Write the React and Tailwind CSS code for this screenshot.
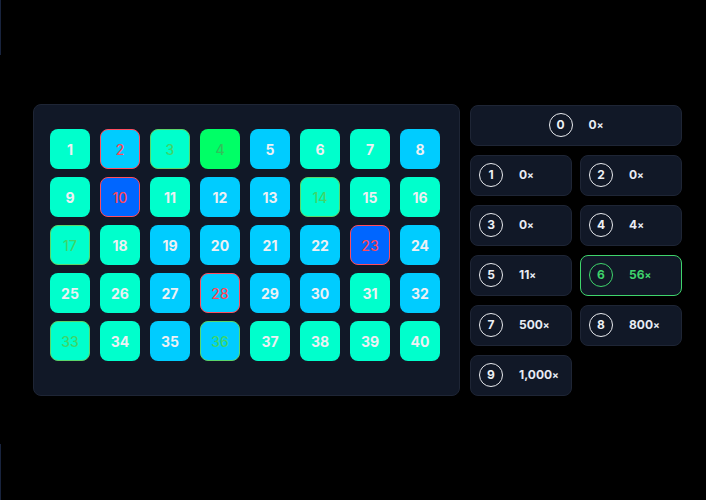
import React from "react";

const T = "bg-[#00ffcc]";
const B = "bg-[#00ccff]";
const D = "bg-[#0066ff]";
const G = "bg-[#00ff66]";

const tiles = [
  [T, "n"], [B, "r"], [T, "g"], [G, "g4"], [B, "n"], [T, "n"], [T, "n"], [B, "n"],
  [T, "n"], [D, "r"], [T, "n"], [B, "n"], [B, "n"], [T, "g"], [T, "n"], [T, "n"],
  [T, "g"], [T, "n"], [B, "n"], [B, "n"], [B, "n"], [B, "n"], [D, "r"], [B, "n"],
  [T, "n"], [T, "n"], [B, "n"], [B, "r"], [B, "n"], [B, "n"], [T, "n"], [B, "n"],
  [T, "g"], [T, "n"], [B, "n"], [B, "g"], [T, "n"], [T, "n"], [T, "n"], [T, "n"],
];

function Tile({ n, bg, state }) {
  let extra = "text-[#eef0f4] font-bold border border-transparent";
  if (state === "r") extra = "text-[#ff4759] font-medium border border-[#ff4d5e]";
  if (state === "g") extra = "text-[#3ed66a] font-medium border border-[#5ad56a]";
  if (state === "g4") extra = "text-[#2fc25a] font-medium border border-transparent";
  return (
    <div className={`w-10 h-10 rounded-lg flex items-center justify-center text-[14px] ${bg} ${extra}`}>
      {n}
    </div>
  );
}

function Pay({ k, mult, sel, wide }) {
  return (
    <div
      className={`h-[41px] rounded-lg bg-[#111827] border flex items-center ${
        sel ? "border-[#3fd46c]" : "border-[#1e2535]"
      } ${wide ? "justify-center" : "pl-[8px]"}`}
    >
      <div
        className={`w-6 h-6 rounded-full border-[1.5px] flex items-center justify-center text-[12px] font-bold ${
          sel ? "border-[#3fd46c] text-[#3fd46c]" : "border-[#e8eaee] text-[#eef0f4]"
        }`}
      >
        {k}
      </div>
      <div className={`ml-4 text-[12px] font-bold ${sel ? "text-[#3fd46c]" : "text-[#e8ecf4]"}`}>
        {mult}
        <span className="text-[10px]">×</span>
      </div>
    </div>
  );
}

export default function App() {
  return (
    <div
      className="relative w-[706px] h-[500px] bg-black flex items-center pl-[33px]"
      style={{ fontFamily: '"Inter", "Liberation Sans", sans-serif' }}
    >
      <div className="absolute left-0 top-0 w-px h-[55px] bg-[#18233d]" />
      <div className="absolute left-0 top-[444px] w-px h-[56px] bg-[#18233d]" />
      <div className="w-[427px] h-[292px] rounded-lg bg-[#111827] border border-[#1e2535] pt-[24px] pl-[16px]">
        <div className="grid grid-cols-[repeat(8,40px)] gap-x-[10px] gap-y-[8px]">
          {tiles.map(([bg, st], i) => (
            <Tile key={i} n={i + 1} bg={bg} state={st} />
          ))}
        </div>
      </div>
      <div className="ml-[10px] w-[212px] flex flex-col gap-[9px]">
        <Pay k="0" mult="0" wide />
        <div className="grid grid-cols-2 gap-x-[8px] gap-y-[9px]">
          <Pay k="1" mult="0" />
          <Pay k="2" mult="0" />
          <Pay k="3" mult="0" />
          <Pay k="4" mult="4" />
          <Pay k="5" mult="11" />
          <Pay k="6" mult="56" sel />
          <Pay k="7" mult="500" />
          <Pay k="8" mult="800" />
          <Pay k="9" mult="1,000" />
        </div>
      </div>
    </div>
  );
}
